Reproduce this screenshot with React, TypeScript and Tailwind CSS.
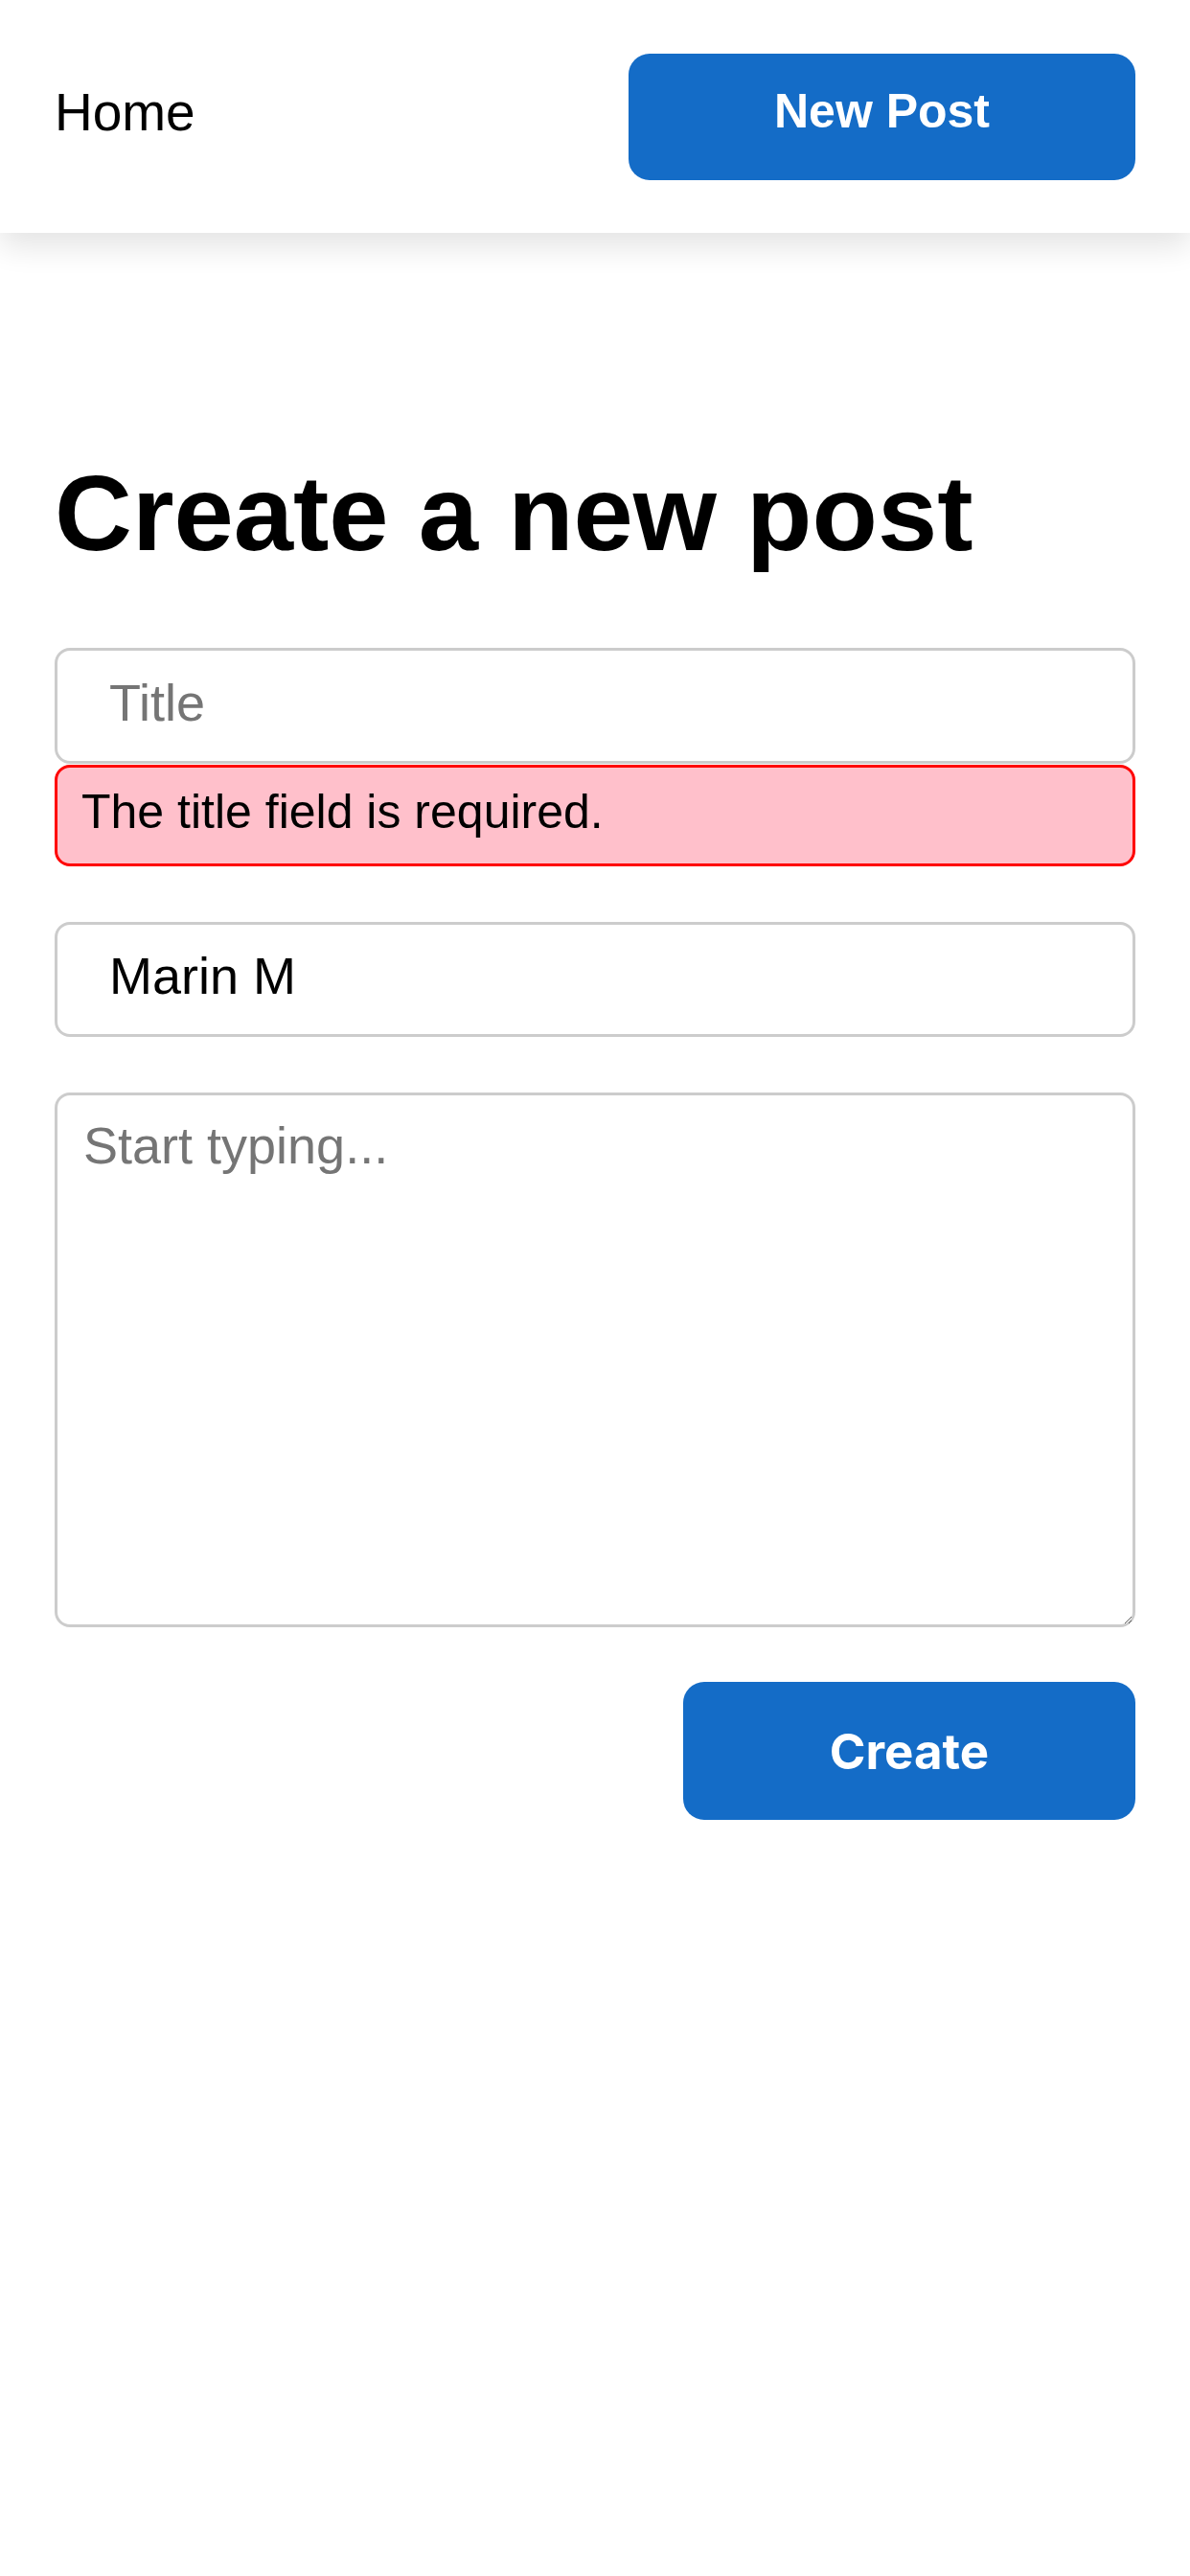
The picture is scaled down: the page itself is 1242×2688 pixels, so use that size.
import React from "react";

export default function App() {
  return (
    <div className="min-h-[2688px] w-full bg-white font-['Liberation_Sans',Arial,sans-serif] text-black">
      <header className="relative z-10 flex h-[243px] items-center justify-between bg-white px-[57px] shadow-[0_14px_30px_rgba(0,0,0,0.11)]">
        <a href="#" className="mb-[8px] text-[55px] leading-none text-black">
          Home
        </a>
        <button className="flex h-[132px] w-[529px] items-center justify-center rounded-[22px] bg-[#146cc7] pb-[11px] text-[50px] font-bold leading-none text-white">
          New Post
        </button>
      </header>

      <main className="px-[57px]">
        <h1 className="mt-[237px] text-[112px] font-bold leading-[112px]">
          Create a new post
        </h1>

        <form className="mt-[84px] flex flex-col" onSubmit={(e) => e.preventDefault()}>
          <input
            type="text"
            placeholder="Title"
            className="h-[121px] w-full rounded-[16px] border-[3px] border-[#cccccc] bg-white pb-[8px] pl-[54px] text-[54px] leading-none text-black outline-none placeholder:text-[#757575]"
          />
          <div className="mt-[1px] flex h-[106px] items-center rounded-[16px] border-[3px] border-[#ff0000] bg-[#ffc0cb] pb-[8px] pl-[25px] text-[50px] leading-none text-black">
            The title field is required.
          </div>

          <input
            type="text"
            defaultValue="Marin M"
            className="mt-[58px] h-[120px] w-full rounded-[16px] border-[3px] border-[#cccccc] bg-white pb-[8px] pl-[54px] text-[54px] leading-none text-black outline-none"
          />

          <textarea
            placeholder="Start typing..."
            className="mt-[58px] h-[558px] w-full rounded-[16px] border-[3px] border-[#cccccc] bg-white pl-[27px] pr-[27px] pt-[12px] text-[54px] text-black outline-none placeholder:text-[#757575]"
          />

          <div className="mt-[57px] flex justify-end">
            <button
              type="submit"
              className="flex h-[144px] w-[472px] items-center justify-center rounded-[22px] bg-[#146cc7] font-['Inter',sans-serif] text-[51px] font-bold leading-none text-white"
            >
              Create
            </button>
          </div>
        </form>
      </main>
    </div>
  );
}
